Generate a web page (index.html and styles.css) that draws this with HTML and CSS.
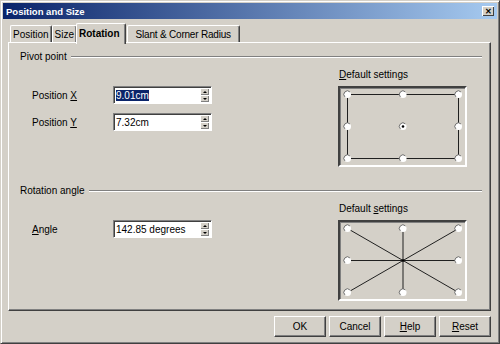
FILE: index.html
```html
<!DOCTYPE html>
<html lang="en">
<head>
    <meta charset="UTF-8">
    <title>Position and Size</title>
    <link rel="stylesheet" href="styles.css">
</head>
<body>
    <div class="dialog">
        <div class="titlebar">
            <span class="title">Position and Size</span>
            <span class="close">&#x2715;</span>
        </div>

        <div class="tabs">
            <div class="tab">Position</div>
            <div class="tab">Size</div>
            <div class="tab active">Rotation</div>
            <div class="tab wide">Slant &amp; Corner Radius</div>
        </div>

        <div class="panel">
            <!-- Pivot point -->
            <div class="group-title"><span>Pivot point</span><span class="rule"></span></div>
            <div class="group-body">
                <div class="fields">
                    <div class="field">
                        <label>Position <u>X</u></label>
                        <div class="spin">
                            <span class="spin-value"><span class="selected">9.01cm</span></span>
                            <span class="spin-btns"><span class="spin-up"></span><span class="spin-down"></span></span>
                        </div>
                    </div>
                    <div class="field">
                        <label>Position <u>Y</u></label>
                        <div class="spin">
                            <span class="spin-value">7.32cm</span>
                            <span class="spin-btns"><span class="spin-up"></span><span class="spin-down"></span></span>
                        </div>
                    </div>
                </div>
                <div class="preview">
                    <div class="preview-label"><u>D</u>efault settings</div>
                    <div class="preview-box">
                        <svg width="125" height="77" viewBox="0 0 125 77">
                            <defs>
                                <g id="radio">
                                    <circle r="3.5" fill="#fff"/>
                                    <path d="M-2.6 2.4A3.5 3.5 0 0 1 2.4-2.6" fill="none" stroke="#707070"/>
                                </g>
                            </defs>
                            <rect x="7.5" y="6.5" width="111" height="64" fill="none" stroke="#202020"/>
                            <use href="#radio" x="7.5" y="6.5"/>
                            <use href="#radio" x="63" y="6.5"/>
                            <use href="#radio" x="118.5" y="6.5"/>
                            <use href="#radio" x="7.5" y="38.5"/>
                            <use href="#radio" x="63" y="38.5"/>
                            <circle cx="63" cy="38.5" r="1.3" fill="#000"/>
                            <use href="#radio" x="118.5" y="38.5"/>
                            <use href="#radio" x="7.5" y="70.5"/>
                            <use href="#radio" x="63" y="70.5"/>
                            <use href="#radio" x="118.5" y="70.5"/>
                        </svg>
                    </div>
                </div>
            </div>

            <!-- Rotation angle -->
            <div class="group-title second"><span>Rotation angle</span><span class="rule"></span></div>
            <div class="group-body">
                <div class="fields">
                    <div class="field">
                        <label><u>A</u>ngle</label>
                        <div class="spin">
                            <span class="spin-value">142.85 degrees</span>
                            <span class="spin-btns"><span class="spin-up"></span><span class="spin-down"></span></span>
                        </div>
                    </div>
                </div>
                <div class="preview">
                    <div class="preview-label">Default <u>s</u>ettings</div>
                    <div class="preview-box">
                        <svg width="125" height="77" viewBox="0 0 125 77">
                            <g stroke="#202020">
                                <line x1="7.5" y1="6.5" x2="118.5" y2="70.5"/>
                                <line x1="118.5" y1="6.5" x2="7.5" y2="70.5"/>
                                <line x1="63" y1="6.5" x2="63" y2="70.5"/>
                                <line x1="7.5" y1="38.5" x2="118.5" y2="38.5"/>
                            </g>
                            <circle cx="63" cy="38.5" r="1.3" fill="#000"/>
                            <use href="#radio" x="7.5" y="6.5"/>
                            <use href="#radio" x="63" y="6.5"/>
                            <use href="#radio" x="118.5" y="6.5"/>
                            <use href="#radio" x="7.5" y="38.5"/>
                            <use href="#radio" x="118.5" y="38.5"/>
                            <use href="#radio" x="7.5" y="70.5"/>
                            <use href="#radio" x="63" y="70.5"/>
                            <use href="#radio" x="118.5" y="70.5"/>
                        </svg>
                    </div>
                </div>
            </div>
        </div>

        <div class="buttons">
            <button>OK</button>
            <button>Cancel</button>
            <button><u>H</u>elp</button>
            <button><u>R</u>eset</button>
        </div>
    </div>
</body>
</html>
```

FILE: styles.css
```css
* {
    box-sizing: border-box;
}
body {
    margin: 0;
    font-family: "Liberation Sans", Arial, sans-serif;
    font-size: 10px;
    color: #000;
    background: #fff;
}
.dialog {
    width: 500px;
    height: 344px;
    padding: 2px;
    background: #d4d0c8;
    border: 1px solid;
    border-color: #d4d0c8 #404040 #404040 #d4d0c8;
    box-shadow: inset 1px 1px #fff, inset -1px -1px #808080;
}
.titlebar {
    height: 16px;
    display: flex;
    align-items: center;
    justify-content: space-between;
    padding: 0 3px 0 3px;
    background: linear-gradient(to right, #0a246a, #a6caf0);
}
.title {
    color: #fff;
    font-weight: bold;
    font-size: 9.5px;
}
.close {
    width: 12px;
    height: 10px;
    display: flex;
    align-items: center;
    justify-content: center;
    font-size: 8px;
    font-weight: bold;
    background: #d4d0c8;
    box-shadow: inset 1px 1px #fff, inset -1px -1px #404040;
}
.tabs {
    display: flex;
    align-items: flex-end;
    height: 20px;
    margin-top: 3px;
    padding-left: 7px;
}
.tab {
    height: 17px;
    padding: 1px 2px 0;
    display: flex;
    align-items: center;
    border-top: 1px solid #fff;
    border-left: 1px solid #fff;
    border-right: 1px solid #404040;
    border-radius: 2px 2px 0 0;
    box-shadow: inset -1px 0 #808080;
}
.tab.active {
    height: 21px;
    margin-bottom: -2px;
    margin-left: -1px;
    padding: 0 5px 2px 2px;
    font-weight: bold;
    background: #d4d0c8;
    position: relative;
    z-index: 1;
}
.tab.wide {
    padding: 1px 8px 0;
    margin-left: 1px;
    letter-spacing: -0.2px;
}
.panel {
    height: 269px;
    margin: 0 6px 0 5px;
    padding: 7px 8px 0 11px;
    border: 1px solid;
    border-color: #fff #404040 #404040 #fff;
    box-shadow: inset -1px -1px #808080;
}
.group-title {
    display: flex;
    align-items: center;
    height: 12px;
}
.group-title.second {
    margin-top: 17px;
}
.rule {
    flex: 1;
    margin-left: 4px;
    margin-top: 1px;
    height: 2px;
    border-top: 1px solid #808080;
    border-bottom: 1px solid #fff;
}
.group-body {
    display: flex;
    margin-top: 7px;
}
.fields {
    width: 318px;
    padding: 17px 0 0 12px;
    display: flex;
    flex-direction: column;
    gap: 9px;
}
.field {
    display: flex;
    align-items: center;
}
.field label {
    width: 81px;
}
.spin {
    width: 99px;
    height: 18px;
    display: flex;
    background: #fff;
    border: 1px solid;
    border-color: #808080 #fff #fff #808080;
    box-shadow: inset 1px 1px #404040;
    padding: 1px 1px 0 2px;
}
.spin-value {
    flex: 1;
    display: flex;
    align-items: center;
}
.selected {
    background: #0a246a;
    color: #fff;
}
.spin-btns {
    width: 9px;
    display: flex;
    flex-direction: column;
    margin: 0 1px 1px 0;
}
.spin-up, .spin-down {
    flex: 1;
    background: #d4d0c8;
    box-shadow: inset 1px 1px #fff, inset -1px -1px #808080;
    display: flex;
    align-items: center;
    justify-content: center;
}
.spin-up::after {
    content: "";
    border: 2px solid transparent;
    border-top: 0;
    border-bottom: 2px solid #000;
}
.spin-down::after {
    content: "";
    border: 2px solid transparent;
    border-bottom: 0;
    border-top: 2px solid #000;
}
.preview-label {
    height: 12px;
    line-height: 12px;
    padding-left: 1px;
}
.preview-box {
    width: 129px;
    height: 81px;
    margin-top: 5px;
    border: 2px solid;
    border-color: #404040 #fff #fff #404040;
    box-shadow: inset 1px 1px #808080;
}
.preview-box svg {
    display: block;
}
.buttons {
    display: flex;
    justify-content: flex-end;
    gap: 3px;
    margin: 5px 6px 0 0;
}
.buttons button {
    width: 52px;
    height: 21px;
    font-family: inherit;
    font-size: 10px;
    color: #000;
    background: #d4d0c8;
    border: 1px solid;
    border-color: #fff #404040 #404040 #fff;
    box-shadow: inset -1px -1px #808080;
    padding: 0;
}
```
